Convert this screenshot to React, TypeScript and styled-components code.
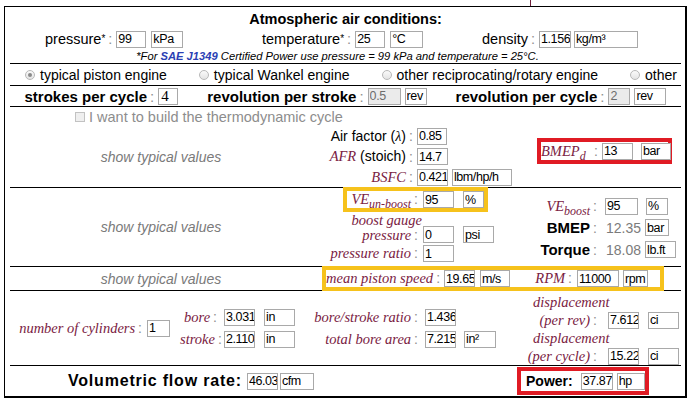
import React from 'react'
import styled, { createGlobalStyle } from 'styled-components'

const SANS = '"Liberation Sans", Arial, sans-serif'
const SERIF = '"Liberation Serif", "Times New Roman", serif'
const MAROON = '#7a2142'
const RED = '#e01b24'
const AMBER = '#f6c21c'

const GlobalStyle = createGlobalStyle`
  html, body {
    margin: 0;
    padding: 0;
    background: #fff;
  }
  body {
    font-family: ${SANS};
    font-size: 14px;
    color: #000;
  }
`

const TopTick = styled.div`
  margin-left: 530px;
  width: 1px;
  height: 6px;
  background: #6d1f3b;
`

const Panel = styled.div`
  margin-left: 4px;
  width: 683px;
  height: 392px;
  box-sizing: border-box;
  border: 1px solid #000;
  border-right-width: 2px;
  border-bottom-width: 2px;
  padding: 0 4px 0 5px;
`

const Section = styled.div<{ $h: number; $last?: boolean }>`
  height: ${p => p.$h}px;
  box-sizing: border-box;
  border-bottom: ${p => (p.$last ? 'none' : '1px solid #000')};
`

const Field = styled.input<{ $w: number; $ml: number; $serif?: boolean }>`
  flex: none;
  box-sizing: border-box;
  width: ${p => p.$w}px;
  height: 17px;
  margin: 0 0 0 ${p => p.$ml}px;
  padding: 0 0 0 ${p => (p.$serif ? 2 : 1)}px;
  border: 1px solid #a9a9a9;
  border-radius: 0;
  background: ${p => (p.disabled ? '#ebebeb' : '#fff')};
  color: ${p => (p.disabled ? '#6d6d6d' : '#000')};
  font-family: ${p => (p.$serif ? SERIF : SANS)};
  font-size: ${p => (p.$serif ? '15px' : '12.5px')};
  letter-spacing: ${p => (p.$serif ? '0' : '-0.4px')};
  outline: none;
`

type ValProps = { w: number; v: string; ml?: number; serif?: boolean; off?: boolean }

const Val = ({ w, v, ml = 0, serif, off }: ValProps) => (
  <Field $w={w} $ml={ml} $serif={serif} disabled={off} readOnly defaultValue={v} />
)

const Colon = styled.span`
  color: #8f8f8f;
  font-weight: normal;
  margin: 0 4px 0 3px;
`

const Star = styled.sup`
  font-size: 10px;
  vertical-align: 6px;
  line-height: 0;
`

const MathLabel = styled.span`
  font-family: ${SERIF};
  font-style: italic;
  font-size: 14.5px;
  color: ${MAROON};
`

const Sub = styled.sub`
  font-size: 12px;
  vertical-align: -4px;
  line-height: 0;
`

const Lambda = styled.span`
  font-family: ${SERIF};
  font-style: italic;
`

const Pair = styled.div`
  display: flex;
  align-items: center;
  white-space: nowrap;
`

/* --- atmosphere --- */

const Title = styled.div`
  padding-top: 3px;
  line-height: 18px;
  text-align: center;
  font-weight: bold;
  font-size: 14.5px;
`

const AtmoRow = styled.div`
  display: grid;
  grid-template-columns: 217px 220px auto;
  align-items: center;
  height: 22px;
  padding-left: 35px;
  font-size: 14.5px;
`

const Note = styled.div`
  padding-right: 16px;
  line-height: 12px;
  text-align: center;
  font-style: italic;
  font-size: 11.2px;

  a {
    color: #2b3fb4;
    font-weight: bold;
    text-decoration: none;
  }
`

/* --- engine type --- */

const OptionRow = styled.div`
  display: flex;
  justify-content: space-between;
  align-items: center;
  height: 21px;
  padding: 0 4px 0 15px;
  font-size: 14px;
`

const Radio = styled.span<{ $on?: boolean }>`
  position: relative;
  display: inline-block;
  box-sizing: border-box;
  width: 10px;
  height: 10px;
  margin-right: 5px;
  border: 1px solid #b8b8b8;
  border-radius: 50%;
  background: linear-gradient(#fafafa, #e4e4e4);

  &::after {
    content: '';
    position: absolute;
    left: 2px;
    top: 2px;
    width: 4px;
    height: 4px;
    border-radius: 50%;
    background: ${p => (p.$on ? '#8a8a8a' : 'transparent')};
  }
`

const CycleRow = styled.div`
  display: flex;
  justify-content: space-around;
  align-items: center;
  height: 20px;
  font-size: 15px;
  font-weight: bold;
`

/* --- main body --- */

const CheckRow = styled.div`
  display: flex;
  align-items: center;
  height: 19px;
  padding-left: 65px;
  color: #8d8d8d;
  font-size: 14.5px;
`

const Checkbox = styled.span`
  display: inline-block;
  box-sizing: border-box;
  width: 10px;
  height: 10px;
  margin-right: 4px;
  border: 1px solid #c2c2c2;
  background: #efefef;
`

const Band = styled.div<{ $h: number }>`
  display: flex;
  height: ${p => p.$h}px;
`

const ShowTypical = styled.div`
  flex: none;
  display: flex;
  align-items: center;
  justify-content: center;
  width: 302px;
  color: #7a7a7a;
  font-style: italic;
  font-size: 14px;
`

const Column = styled.div<{ $w?: number; $pt?: number }>`
  flex: ${p => (p.$w ? 'none' : '1')};
  width: ${p => (p.$w ? `${p.$w}px` : 'auto')};
  display: flex;
  flex-direction: column;
  padding-top: ${p => p.$pt ?? 0}px;
`

const Line = styled.div<{ $h: number; $end?: boolean }>`
  display: flex;
  align-items: ${p => (p.$end ? 'flex-end' : 'center')};
  height: ${p => p.$h}px;
  white-space: nowrap;
`

const Label = styled.span<{ $w: number; $left?: boolean }>`
  flex: none;
  display: inline-block;
  width: ${p => p.$w}px;
  text-align: ${p => (p.$left ? 'left' : 'right')};
  line-height: 15px;
  white-space: nowrap;
`

const Bold = styled.span<{ $size?: number; $ml?: number }>`
  margin-left: ${p => p.$ml ?? 0}px;
  font-weight: bold;
  font-size: ${p => p.$size ?? 15}px;
`

const FlowLabel = styled.span`
  font-weight: bold;
  font-size: 16px;
  letter-spacing: 0.8px;
`

const Readout = styled.span`
  margin: 0 4px 0 5px;
  color: #7b7b7b;
`

const Highlight = styled.div<{ $color: string; $w: number; $h: number; $ml: number; $mt: number }>`
  flex: none;
  display: flex;
  align-items: center;
  box-sizing: border-box;
  width: ${p => p.$w}px;
  height: ${p => p.$h}px;
  margin: ${p => p.$mt}px 0 0 ${p => p.$ml}px;
  border: 4px solid ${p => p.$color};
  white-space: nowrap;
`

const Indent = styled.div`
  display: flex;
  align-items: center;
  height: 18px;
  padding-left: 18px;
`

const FlowCell = styled.div`
  flex: none;
  display: flex;
  align-items: center;
  width: 507px;
  box-sizing: border-box;
  padding-left: 58px;
`

export default function App() {
  return (
    <>
      <GlobalStyle />
      <TopTick />
      <Panel>
        <Section $h={57}>
          <Title>Atmospheric air conditions:</Title>
          <AtmoRow>
            <Pair>
              pressure<Star>*</Star>
              <Colon>:</Colon>
              <Val w={30} v="99" />
              <Val w={32} v="kPa" ml={5} />
            </Pair>
            <Pair>
              temperature<Star>*</Star>
              <Colon>:</Colon>
              <Val w={30} v="25" />
              <Val w={33} v="°C" ml={5} />
            </Pair>
            <Pair>
              density
              <Colon>:</Colon>
              <Val w={32} v="1.156" />
              <Val w={64} v="kg/m³" ml={3} />
            </Pair>
          </AtmoRow>
          <Note>
            *For <a>SAE J1349</a> Certified Power use pressure = 99 kPa and temperature = 25°C.
          </Note>
        </Section>

        <Section $h={22}>
          <OptionRow>
            <Pair><Radio $on />typical piston engine</Pair>
            <Pair><Radio />typical Wankel engine</Pair>
            <Pair><Radio />other reciprocating/rotary engine</Pair>
            <Pair><Radio />other</Pair>
          </OptionRow>
        </Section>

        <Section $h={21}>
          <CycleRow>
            <Pair>
              strokes per cycle<Colon>:</Colon>
              <Val w={20} v="4" serif />
            </Pair>
            <Pair>
              revolution per stroke<Colon>:</Colon>
              <Val w={33} v="0.5" off />
              <Val w={22} v="rev" ml={4} />
            </Pair>
            <Pair>
              revolution per cycle<Colon>:</Colon>
              <Val w={22} v="2" off />
              <Val w={32} v="rev" ml={4} />
            </Pair>
          </CycleRow>
        </Section>

        <Section $h={81}>
          <CheckRow>
            <Checkbox />I want to build the thermodynamic cycle
          </CheckRow>
          <Band $h={61}>
            <ShowTypical>show typical values</ShowTypical>
            <Column $w={210}>
              <Line $h={20}>
                <Label $w={94}>Air factor (<Lambda>λ</Lambda>)</Label>
                <Colon>:</Colon>
                <Val w={30} v="0.85" />
              </Line>
              <Line $h={21}>
                <Label $w={94}><MathLabel>AFR</MathLabel> (stoich)</Label>
                <Colon>:</Colon>
                <Val w={31} v="14.7" />
              </Line>
              <Line $h={20}>
                <Label $w={94}><MathLabel>BSFC</MathLabel></Label>
                <Colon>:</Colon>
                <Val w={31} v="0.421" />
                <Val w={60} v="lbm/hp/h" ml={4} />
              </Line>
            </Column>
            <Column $pt={12}>
              <Highlight $color={RED} $w={135} $h={26} $ml={15} $mt={0}>
                <Label $w={50} $left>
                  <MathLabel>BMEP<Sub>d</Sub></MathLabel>
                </Label>
                <Colon>:</Colon>
                <Val w={31} v="13" />
                <Val w={30} v="bar" ml={8} />
              </Highlight>
            </Column>
          </Band>
        </Section>

        <Section $h={79}>
          <Band $h={78}>
            <ShowTypical>show typical values</ShowTypical>
            <Column $w={210}>
              <Highlight $color={AMBER} $w={145} $h={25} $ml={31} $mt={-1}>
                <Label $w={75}>
                  <MathLabel>VE<Sub>un-boost</Sub></MathLabel>
                  <Colon>:</Colon>
                </Label>
                <Val w={31} v="95" ml={1} />
                <Val w={21} v="%" ml={9} />
              </Highlight>
              <Line $h={31} $end>
                <Label $w={110}>
                  <MathLabel>boost gauge</MathLabel>
                  <br />
                  <MathLabel>pressure</MathLabel>
                  <Colon>:</Colon>
                </Label>
                <Val w={31} v="0" ml={1} />
                <Val w={31} v="psi" ml={9} />
              </Line>
              <Line $h={21}>
                <Label $w={110}>
                  <MathLabel>pressure ratio</MathLabel>
                  <Colon>:</Colon>
                </Label>
                <Val w={31} v="1" ml={1} />
              </Line>
            </Column>
            <Column $pt={8}>
              <Line $h={20}>
                <Label $w={79}>
                  <MathLabel>VE<Sub>boost</Sub></MathLabel>
                  <Colon>:</Colon>
                </Label>
                <Val w={33} v="95" ml={4} />
                <Val w={22} v="%" ml={8} />
              </Line>
              <Line $h={23}>
                <Label $w={79}>
                  <Bold>BMEP</Bold>
                  <Colon>:</Colon>
                </Label>
                <Readout>12.35</Readout>
                <Val w={24} v="bar" />
              </Line>
              <Line $h={21}>
                <Label $w={79}>
                  <Bold>Torque</Bold>
                  <Colon>:</Colon>
                </Label>
                <Readout>18.08</Readout>
                <Val w={31} v="lb.ft" />
              </Line>
            </Column>
          </Band>
        </Section>

        <Section $h={24}>
          <Band $h={23}>
            <ShowTypical>show typical values</ShowTypical>
            <Highlight $color={AMBER} $w={342} $h={25} $ml={10} $mt={-1}>
              <Label $w={117}>
                <MathLabel>mean piston speed</MathLabel>
                <Colon>:</Colon>
              </Label>
              <Val w={31} v="19.65" ml={1} />
              <Val w={30} v="m/s" ml={5} />
              <Label $w={66}>
                <MathLabel>RPM</MathLabel>
                <Colon>:</Colon>
              </Label>
              <Val w={42} v="11000" ml={1} />
              <Val w={25} v="rpm" ml={4} />
            </Highlight>
          </Band>
        </Section>

        <Section $h={75}>
          <Band $h={74}>
            <Column $w={170}>
              <Line $h={74}>
                <Label $w={136}>
                  <MathLabel>number of cylinders</MathLabel>
                  <Colon>:</Colon>
                </Label>
                <Val w={23} v="1" ml={1} />
              </Line>
            </Column>
            <Column $w={125} $pt={15}>
              <Line $h={22}>
                <Label $w={41}>
                  <MathLabel>bore</MathLabel>
                  <Colon>:</Colon>
                </Label>
                <Val w={31} v="3.031" ml={3} />
                <Val w={31} v="in" ml={9} />
              </Line>
              <Line $h={22}>
                <Label $w={41}>
                  <MathLabel>stroke</MathLabel>
                  <Colon>:</Colon>
                </Label>
                <Val w={31} v="2.110" ml={3} />
                <Val w={31} v="in" ml={9} />
              </Line>
            </Column>
            <Column $w={210} $pt={15}>
              <Line $h={22}>
                <Label $w={117}>
                  <MathLabel>bore/stroke ratio</MathLabel>
                  <Colon>:</Colon>
                </Label>
                <Val w={31} v="1.436" ml={3} />
              </Line>
              <Line $h={22}>
                <Label $w={117}>
                  <MathLabel>total bore area</MathLabel>
                  <Colon>:</Colon>
                </Label>
                <Val w={31} v="7.215" ml={3} />
                <Val w={32} v="in²" ml={8} />
              </Line>
            </Column>
            <Column $pt={2}>
              <Indent>
                <MathLabel>displacement</MathLabel>
              </Indent>
              <Line $h={18}>
                <Label $w={86}>
                  <MathLabel>(per rev)</MathLabel>
                  <Colon>:</Colon>
                </Label>
                <Val w={31} v="7.612" ml={7} />
                <Val w={31} v="ci" ml={9} />
              </Line>
              <Indent>
                <MathLabel>displacement</MathLabel>
              </Indent>
              <Line $h={18}>
                <Label $w={86}>
                  <MathLabel>(per cycle)</MathLabel>
                  <Colon>:</Colon>
                </Label>
                <Val w={31} v="15.22" ml={7} />
                <Val w={31} v="ci" ml={9} />
              </Line>
            </Column>
          </Band>
        </Section>

        <Section $h={30} $last>
          <Band $h={30}>
            <FlowCell>
              <FlowLabel>Volumetric flow rate:</FlowLabel>
              <Val w={31} v="46.03" ml={5} />
              <Val w={34} v="cfm" ml={2} />
            </FlowCell>
            <Highlight $color={RED} $w={132} $h={28} $ml={0} $mt={1}>
              <Bold $size={14} $ml={5}>Power:</Bold>
              <Val w={32} v="37.87" ml={8} />
              <Val w={28} v="hp" ml={4} />
            </Highlight>
          </Band>
        </Section>
      </Panel>
    </>
  )
}
